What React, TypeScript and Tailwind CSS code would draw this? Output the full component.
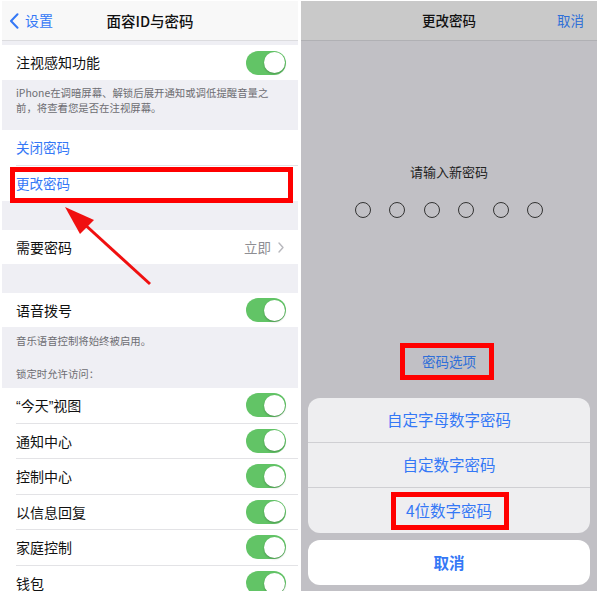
import React from "react";

const FONT = { fontFamily: '"Noto Sans CJK SC", "Noto Sans", sans-serif' };
const Q = { fontFamily: '"Liberation Sans", sans-serif' };

function Toggle() {
  return (
    <div className="relative h-[24px] w-[40px] rounded-full bg-[#62c466]">
      <div className="absolute right-[1.5px] top-[1.5px] h-[21px] w-[21px] rounded-full bg-white shadow-[0_1px_2px_rgba(0,0,0,0.25)]" />
    </div>
  );
}

function ToggleRow({ label, last }: { label: React.ReactNode; last?: boolean }) {
  return (
    <div className="flex h-[35.5px] shrink-0 items-stretch bg-white pl-[14px]">
      <div
        className={
          "flex flex-1 items-center justify-between pr-[12px] " +
          (last ? "" : "border-b border-[#e3e3e6]")
        }
      >
        <span className="text-[14px] leading-[14px] text-[#111]">{label}</span>
        <Toggle />
      </div>
    </div>
  );
}

function LeftPanel() {
  return (
    <div className="relative flex h-full w-[296px] flex-col overflow-hidden bg-[#efeff4]">
      <div className="relative flex h-[40px] shrink-0 items-center justify-center border-b border-[#dcdcdf] bg-[#f8f8f8]">
        <div className="absolute left-[7px] top-0 flex h-full items-center gap-[6px] text-[#3478f6]">
          <svg width="10" height="16" viewBox="0 0 10 16">
            <path d="M8.5 1.2 L2 8 L8.5 14.8" fill="none" stroke="#3478f6" strokeWidth="2" strokeLinecap="round" strokeLinejoin="round" />
          </svg>
          <span className="text-[14px]">设置</span>
        </div>
        <span className="text-[14.5px] font-medium text-[#111]">面容ID与密码</span>
      </div>
      <div className="h-[4px] shrink-0" />
      <div className="flex h-[35px] shrink-0 items-center justify-between bg-white pl-[14px] pr-[12px]">
        <span className="text-[14px] text-[#111]">注视感知功能</span>
        <Toggle />
      </div>
      <div className="h-[50px] shrink-0 px-[14px] pt-[5px] text-[10.4px] leading-[15px] text-[#6d6d72]">
        iPhone在调暗屏幕、解锁后展开通知或调低提醒音量之
        <br />
        前，将查看您是否在注视屏幕。
      </div>
      <div className="flex h-[35.5px] shrink-0 items-stretch bg-white pl-[14px]">
        <div className="flex flex-1 items-center border-b border-[#e3e3e6]">
          <span className="text-[13.5px] text-[#3478f6]">关闭密码</span>
        </div>
      </div>
      <div className="flex h-[35.5px] shrink-0 items-center bg-white pl-[14px]">
        <span className="text-[13.5px] text-[#3478f6]">更改密码</span>
      </div>
      <div className="h-[29px] shrink-0" />
      <div className="flex h-[34px] shrink-0 items-center justify-between bg-white pl-[14px] pr-[14px]">
        <span className="text-[14px] text-[#111]">需要密码</span>
        <div className="flex items-center gap-[7px]">
          <span className="text-[13.5px] text-[#8e8e93]">立即</span>
          <svg width="6" height="11" viewBox="0 0 6 11">
            <path d="M1 1 L5 5.5 L1 10" fill="none" stroke="#b8b8bd" strokeWidth="1.4" strokeLinecap="round" strokeLinejoin="round" />
          </svg>
        </div>
      </div>
      <div className="h-[29px] shrink-0" />
      <div className="flex h-[34px] shrink-0 items-center justify-between bg-white pl-[14px] pr-[12px]">
        <span className="text-[14px] text-[#111]">语音拨号</span>
        <Toggle />
      </div>
      <div className="h-[61px] shrink-0 px-[14px] pt-[6px] text-[10.4px] text-[#6d6d72]">
        <div className="leading-[15px]">音乐语音控制将始终被启用。</div>
        <div className="mt-[18px] leading-[15px]">锁定时允许访问：</div>
      </div>
      <ToggleRow
        label={
          <>
            <span style={Q}>“</span>今天<span style={Q}>”</span>视图
          </>
        }
      />
      <ToggleRow label="通知中心" />
      <ToggleRow label="控制中心" />
      <ToggleRow label="以信息回复" />
      <ToggleRow label="家庭控制" />
      <ToggleRow label="钱包" last />

      <div className="absolute left-[8px] top-[166px] h-[36px] w-[283px] border-[5px] border-[#ff0000]" />
      <svg className="absolute left-0 top-0" width="296" height="593" viewBox="0 0 296 593">
        <line x1="148" y1="283" x2="80" y2="221" stroke="#f01010" strokeWidth="3" />
        <polygon points="63,206 92,219 78,233" fill="#f01010" />
      </svg>
    </div>
  );
}

function SheetRow({ label, sep }: { label: string; sep?: boolean }) {
  return (
    <div
      className={
        "flex h-[45px] items-center justify-center text-[15.5px] text-[#3478f6] " +
        (sep ? "border-b border-[#cfcfd3]" : "")
      }
    >
      {label}
    </div>
  );
}

function RightPanel() {
  return (
    <div className="relative flex h-full w-[296px] flex-col overflow-hidden bg-[#c1c0c5]">
      <div className="relative flex h-[40px] shrink-0 items-center justify-center border-b border-[#b0b0b4] bg-[#c9c9c9]">
        <span className="text-[13.5px] font-medium text-[#111]">更改密码</span>
        <span className="absolute right-[13px] text-[13.5px] text-[#2f6fd8]">取消</span>
      </div>
      <div className="flex flex-1 flex-col items-center">
        <div className="mt-[122px] text-[13px] leading-[18px] text-[#222]">请输入新密码</div>
        <div className="mt-[21px] flex gap-[18.5px]">
          {[0, 1, 2, 3, 4, 5].map((i) => (
            <div key={i} className="h-[16px] w-[16px] rounded-full border-[1.5px] border-[#333]" />
          ))}
        </div>
        <div className="mt-[134px] text-[13.5px] leading-[18px] text-[#2f6fd8]">密码选项</div>
        <div className="mt-[28px] w-[282px] overflow-hidden rounded-[12px] bg-[#eeeef0]">
          <SheetRow label="自定字母数字密码" sep />
          <SheetRow label="自定数字密码" sep />
          <SheetRow label="4位数字密码" />
        </div>
        <div className="mt-[7px] flex h-[45px] w-[282px] items-center justify-center rounded-[12px] bg-white text-[15.5px] font-semibold text-[#3478f6]">
          取消
        </div>
      </div>
      <div className="absolute left-[99px] top-[342px] h-[37px] w-[94px] border-[5px] border-[#ff0000]" />
      <div className="absolute left-[90px] top-[491px] h-[38px] w-[118px] border-[5px] border-[#ff0000]" />
    </div>
  );
}

export default function App() {
  return (
    <div style={FONT} className="flex h-[593px] w-[600px] gap-[3px] bg-white pl-[2px] pt-[1px] pb-[2px]">
      <LeftPanel />
      <RightPanel />
    </div>
  );
}
